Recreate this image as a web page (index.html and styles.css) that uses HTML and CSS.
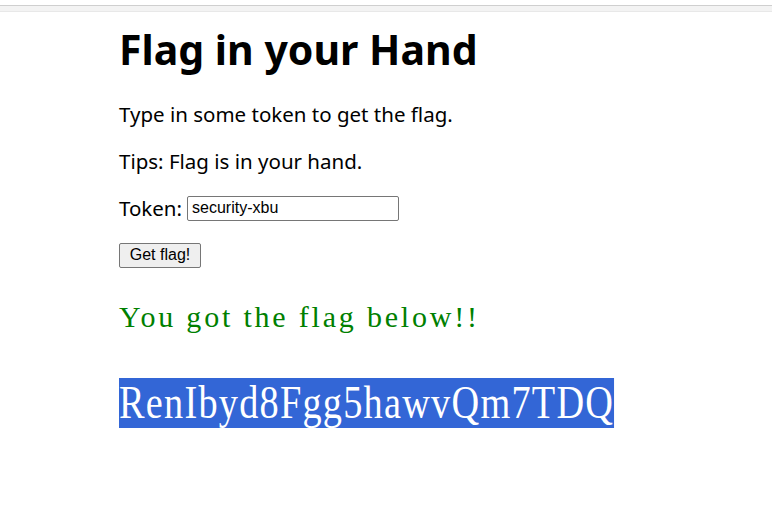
FILE: index.html
```html
<!DOCTYPE html>
<html lang="en">
<head>
    <meta charset="UTF-8">
    <title>Flag in your Hand</title>
    <link rel="stylesheet" href="styles.css">
</head>
<body>
    <div class="topbar"></div>
    <div class="page">
        <h1>Flag in your Hand</h1>
        <p>Type in some token to get the flag.</p>
        <p>Tips: Flag is in your hand.</p>
        <form>
            <p class="field">Token: <input type="text" class="token" value="security-xbu"></p>
            <p class="field"><button type="button" class="btn">Get flag!</button></p>
        </form>
        <p class="result">You got the flag below!!</p>
        <p class="flag"><span class="flag-text">RenIbyd8Fgg5hawvQm7TDQ</span></p>
    </div>
</body>
</html>
```

FILE: styles.css
```css
body {
    margin: 0;
    font-family: "Noto Sans", "Open Sans", sans-serif;
    color: #000;
    background: #fff;
}

.topbar {
    margin-top: 5px;
    height: 5px;
    background: #f3f3f3;
    border-top: 1px solid #cfcfcf;
    border-bottom: 1px solid #e8e8e8;
}

.page {
    padding: 12px 0 0 119px;
}

h1 {
    font-size: 41px;
    line-height: 50px;
    margin: 0 0 27px;
}

p {
    font-size: 20.5px;
    line-height: 26px;
    margin: 0 0 21px;
}

.field {
    display: flex;
    align-items: center;
    gap: 5px;
    height: 26px;
}

.token {
    width: 212px;
    height: 25px;
    box-sizing: border-box;
    border: 1px solid #767676;
    border-radius: 2px;
    font-family: "Liberation Sans", Arial, sans-serif;
    font-size: 16px;
    padding: 1px 4px;
    margin: 0;
}

.btn {
    width: 82px;
    height: 25px;
    background: #efefef;
    border: 1px solid #767676;
    border-radius: 2px;
    font-family: "Liberation Sans", Arial, sans-serif;
    font-size: 16px;
    padding: 0;
}

.result {
    margin: 0;
    padding-top: 11px;
    height: 78px;
    font-family: "Liberation Serif", serif;
    font-size: 30px;
    line-height: 34px;
    letter-spacing: 2.8px;
    color: #008000;
}

.flag {
    font-family: "Liberation Serif", serif;
    font-size: 46px;
    line-height: 50px;
}

.flag-text {
    display: inline-block;
    vertical-align: top;
    letter-spacing: 1.5px;
    background: #3366d6;
    color: #fff;
    transform: scaleX(0.832);
    transform-origin: left top;
}
```
